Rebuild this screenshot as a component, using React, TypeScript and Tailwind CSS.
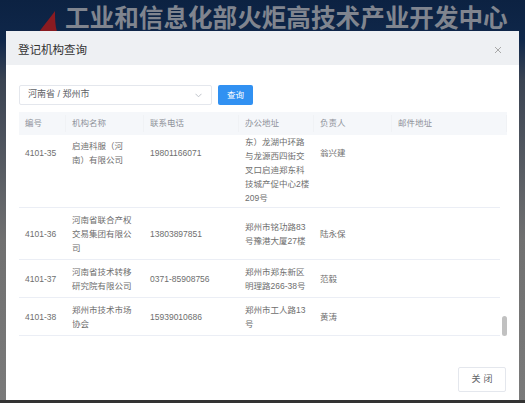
import React from "react";

type Row = {
  id: string;
  name: string[];
  phone: string;
  addr: string[];
  person: string;
};

const rows: Row[] = [
  {
    id: "4101-36",
    name: ["河南省联合产权", "交易集团有限公", "司"],
    phone: "13803897851",
    addr: ["郑州市铭功路83", "号豫港大厦27楼"],
    person: "陆永保",
  },
  {
    id: "4101-37",
    name: ["河南省技术转移", "研究院有限公司"],
    phone: "0371-85908756",
    addr: ["郑州市郑东新区", "明理路266-38号"],
    person: "范毅",
  },
  {
    id: "4101-38",
    name: ["郑州市技术市场", "协会"],
    phone: "15939010686",
    addr: ["郑州市工人路13", "号"],
    person: "黄涛",
  },
];

function Lines({ lines }: { lines: string[] }) {
  return (
    <div className="flex flex-col">
      {lines.map((l, i) => (
        <span key={i} className="whitespace-nowrap">
          {l}
        </span>
      ))}
    </div>
  );
}

export default function App() {
  return (
    <div className="relative w-[525px] h-[403px] overflow-hidden flex flex-col bg-[#777777] font-['Liberation_Sans','Noto_Sans_CJK_SC',sans-serif]">
      {/* page behind the overlay */}
      <div className="h-[80px] bg-gradient-to-b from-[#0c2242] via-[#0f274a] to-[#3a4352] flex items-start">
        <svg width="30" height="30" viewBox="0 0 30 30" className="ml-[35px] mt-[10px]">
          <path d="M20 1 C15 8 9 15 4 22 L22 22 C20 15 20 8 20 1 Z" fill="#8a1b21" />
        </svg>
        <span className="mt-[7px] text-[24.6px] leading-none font-bold text-[#80858f] whitespace-nowrap">
          工业和信息化部火炬高技术产业开发中心
        </span>
      </div>
      <div className="flex-1 bg-gradient-to-b from-[#3a4352] via-[#707070] to-[#7a7a7a]" />
      <div className="h-[3px] bg-[#333333]" />

      {/* dialog */}
      <div className="absolute left-[6px] top-[31px] w-[513px] h-[369px] bg-white flex flex-col">
        <div className="h-[34px] bg-[#eef0f3] flex items-center justify-between pl-[12px] pr-[17px] pt-[6px]">
          <span className="text-[11.5px] text-[#333333]">登记机构查询</span>
          <svg width="8" height="8" viewBox="0 0 8 8" className="mb-[2px]">
            <path d="M1 1 L7 7 M7 1 L1 7" stroke="#a8a8a8" strokeWidth="1" />
          </svg>
        </div>

        <div className="flex flex-col px-[13px] pt-[20px] flex-1">
          <div className="flex items-center">
            <div className="w-[193px] h-[20px] border border-[#e4e7ed] rounded-[2px] flex items-center justify-between pl-[8px] pr-[9px]">
              <span className="text-[9px] text-[#606266]">河南省 / 郑州市</span>
              <svg width="7" height="5" viewBox="0 0 7 5">
                <path d="M0.5 0.8 L3.5 3.8 L6.5 0.8" stroke="#b8bcc4" strokeWidth="0.9" fill="none" />
              </svg>
            </div>
            <div className="ml-[6px] w-[35px] h-[20px] bg-[#3191f2] rounded-[2px] flex items-center justify-center text-[8.5px] text-white">
              查询
            </div>
          </div>

          {/* table */}
          <div className="mt-[7px] w-[488px]">
            <div className="h-[23px] bg-[#f5f7fa] grid grid-cols-[47px_78px_95px_75px_78px_115px] text-[8.5px] text-[#8f939a]">
              {["编号", "机构名称", "联系电话", "办公地址", "负责人", "邮件地址"].map((h) => (
                <div key={h} className="flex items-center pl-[6px] border-r border-[#f0f2f5] my-[3px]">
                  {h}
                </div>
              ))}
            </div>
            <div className="relative h-[201px] overflow-hidden">
              <div className="w-[481px] flex flex-col text-[8.5px] leading-[14px] text-[#6e6e6e]">
                {/* partially scrolled first row */}
                <div className="h-[73px] grid grid-cols-[47px_78px_95px_75px_78px_108px] items-start border-b border-[#ebeef5]">
                  <div className="pl-[6px] pt-[11px]">4101-35</div>
                  <div className="pl-[6px] pt-[4px]">
                    <Lines lines={["启迪科服（河", "南）有限公司"]} />
                  </div>
                  <div className="pl-[6px] pt-[11px]">19801166071</div>
                  <div className="pl-[6px] pt-[0px]">
                    <Lines lines={["东）龙湖中环路", "与龙源西四街交", "叉口启迪郑东科", "技城产促中心2楼", "209号"]} />
                  </div>
                  <div className="pl-[6px] pt-[11px]">翁兴建</div>
                  <div />
                </div>
                {rows.map((r) => (
                  <div
                    key={r.id}
                    className="grid grid-cols-[47px_78px_95px_75px_78px_108px] border-b border-[#ebeef5] py-[4.5px]"
                  >
                    <div className="pl-[6px] flex items-center">{r.id}</div>
                    <div className="pl-[6px] flex items-center">
                      <Lines lines={r.name} />
                    </div>
                    <div className="pl-[6px] flex items-center">{r.phone}</div>
                    <div className="pl-[6px] flex items-center">
                      <Lines lines={r.addr} />
                    </div>
                    <div className="pl-[6px] flex items-center">{r.person}</div>
                    <div className="pl-[6px] flex items-center" />
                  </div>
                ))}
              </div>
              <div className="absolute right-0 bottom-0 w-[5px] h-[20px] rounded-[3px] bg-[#c1c1c1]" />
            </div>
          </div>

          <div className="mt-auto flex justify-end pb-[8px]">
            <div className="w-[48px] h-[25px] border border-[#e4e7ed] rounded-[2px] flex items-center justify-center text-[9px] text-[#606266] tracking-[3px] pl-[3px]">
              关闭
            </div>
          </div>
        </div>
      </div>
    </div>
  );
}
